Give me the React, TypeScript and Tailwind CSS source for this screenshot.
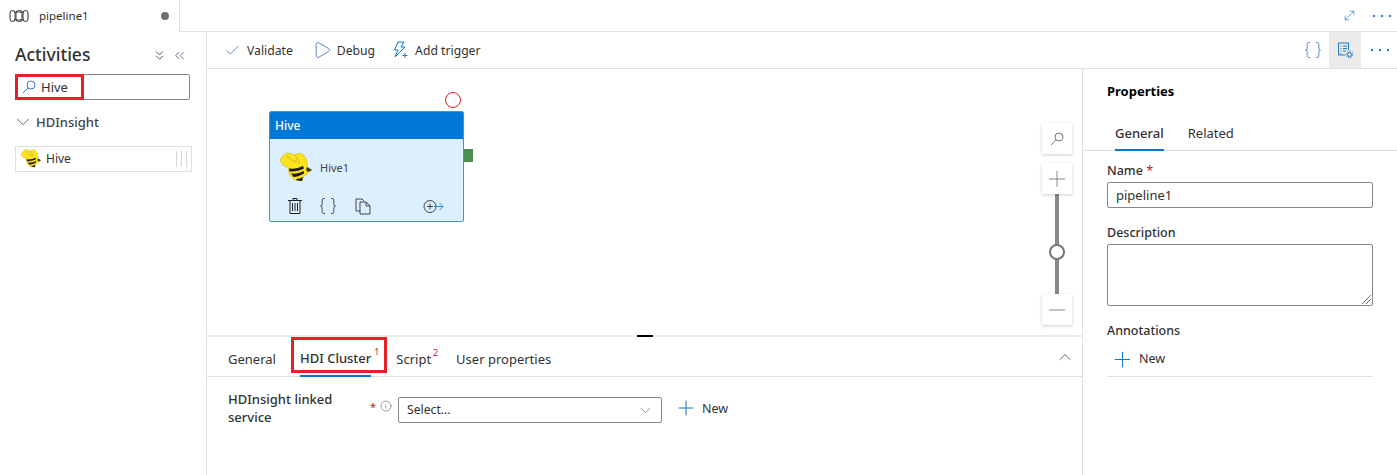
import React from 'react';
import { Braces, Check, ChevronDown, ChevronUp, ChevronsDown, ChevronsLeft, Play, Plus, Minus, MoveDiagonal, Info } from 'lucide-react';

const FONT = "[font-family:'Noto_Sans','Open_Sans',sans-serif]";

function Bee({ size }: { size: number }) {
    return (
        <svg width={size} height={size} viewBox="0 0 32 32">
            <path d="M0 8 C2 5 4 2 7 1 C10 1 13 2 15 3 C17 1 20 1 22 2 C25 4 27 7 27 10 L27 15 L32 18 L29 20 L27 22 L23 25 L22 29 L15 28 C12 26 10 24 9 21 L8 15 C6 15 4 14 3 13 C2 11 1 10 0 8 Z" fill="#fbe31f" stroke="#c7a90a" strokeWidth="0.5" />
            <path d="M9 16.5 C14 17 19 16 23 14 L24 16.5 C20 18.5 14 20 9.5 19.5 Z" fill="#211d0c" />
            <path d="M11 21.5 C15 22 20 21 24 19 L24 21.5 C20 24 16 25 13.5 25 Z" fill="#211d0c" />
            <path d="M16 27 C18 27 21 26 23 25 L22 29 L17 28.5 Z" fill="#211d0c" />
            <path d="M27 15 L32 18 L28 20 L26 18 Z" fill="#3b3514" />
            <path d="M15 3 C17 6 19 9 19 12 M7 4 C10 7 13 9 17 10" fill="none" stroke="#b39600" strokeWidth="0.6" />
        </svg>
    );
}

function PipelineIcon() {
    return (
        <svg width="20" height="14" viewBox="0 0 20 14" fill="none" stroke="#333" strokeWidth="1">
            <rect x="1" y="1.5" width="5" height="11" rx="2.5" />
            <rect x="7" y="1.5" width="6" height="11" rx="2.5" />
            <rect x="14" y="1.5" width="5" height="11" rx="2.5" />
            <path d="M5 3h10M5 11h10" />
        </svg>
    );
}

function GlassIcon({ className }: { className: string }) {
    return (
        <svg width="14" height="14" viewBox="0 0 14 14" fill="none" stroke="currentColor" strokeWidth="1" className={className}>
            <circle cx="9" cy="5" r="4" />
            <path d="M6 8L1 13" />
        </svg>
    );
}

function TriggerIcon() {
    return (
        <svg width="17" height="18" viewBox="0 0 17 18" fill="none" stroke="#0f78d4" strokeWidth="1">
            <path d="M6 1h6L9 6h4L3 16l3-7H2.5Z" />
            <path d="M13 12v5M10.5 14.5h5" />
        </svg>
    );
}

function PropertiesIcon() {
    return (
        <svg width="17" height="17" viewBox="0 0 17 17" fill="none" stroke="#1b76c8" strokeWidth="1">
            <path d="M8 13H1.5V1h10v7" />
            <path d="M3.5 4h1M6 4h4M3.5 6.5h1M6 6.5h4M3.5 9h1M6 9h3M3.5 11.5h1" />
            <circle cx="12.5" cy="12.5" r="2" />
            <circle cx="12.5" cy="12.5" r="3.4" strokeDasharray="1.4 1.2" />
        </svg>
    );
}

function TrashIcon() {
    return (
        <svg width="14" height="16" viewBox="0 0 14 16" fill="none" stroke="#222" strokeWidth="1">
            <path d="M0 2.5h14M5 2.5V.5h4v2M2 2.5V15.5h10V2.5" />
            <path d="M4.5 5v8M7 5v8M9.5 5v8" />
        </svg>
    );
}

function CopyIcon() {
    return (
        <svg width="16" height="17" viewBox="0 0 16 17" fill="none" stroke="#444" strokeWidth="1">
            <path d="M5 13H1V1h6l2 2" />
            <path d="M5 4h6l4 4v8H5Z" />
            <path d="M11 4v4h4" />
        </svg>
    );
}

function AddOutputIcon() {
    return (
        <svg width="21" height="15" viewBox="0 0 21 15" fill="none">
            <circle cx="7" cy="7.5" r="6" stroke="#444" />
            <path d="M4 7.5h6M7 4.5v6" stroke="#444" />
            <path d="M11 7.5h9M16.5 4l3.5 3.5-3.5 3.5" stroke="#1a9ad6" />
        </svg>
    );
}

function Dots() {
    return (
        <span className="flex gap-[6px]">
            <i className="w-[2px] h-[2px] bg-[#0f78d4]" />
            <i className="w-[2px] h-[2px] bg-[#0f78d4]" />
            <i className="w-[2px] h-[2px] bg-[#0f78d4]" />
        </span>
    );
}

function ZoomButton({ children, className }: { children: React.ReactNode; className: string }) {
    return (
        <div className={`absolute left-[1042px] w-[30px] h-[31px] bg-white shadow-[0_1px_3px_rgba(0,0,0,0.2)] flex items-center justify-center ${className}`}>
            {children}
        </div>
    );
}

export default function App() {
    return (
        <div className={`${FONT} w-[1397px] h-[475px] bg-white text-[#323130] text-[13px] flex flex-col overflow-hidden`}>
            <div className="h-[32px] shrink-0 flex border-b border-[#e1dfdd]">
                <div className="w-[180px] h-[32px] bg-white border-r border-[#e1dfdd] flex items-center pl-[9px] pr-[10px]">
                    <PipelineIcon />
                    <span className="ml-[10px] text-[11.5px] leading-none">pipeline1</span>
                    <span className="ml-auto w-[8px] h-[8px] rounded-full bg-[#6e6e6e]" />
                </div>
                <div className="flex-1 flex items-center justify-end gap-[16px] pr-[6px]">
                    <MoveDiagonal size={15} strokeWidth={1} className="text-[#0f78d4]" />
                    <Dots />
                </div>
            </div>
            <div className="flex-1 flex min-h-0">
                <aside className="w-[207px] shrink-0 border-r border-[#e1dfdd] px-[15px] pt-[11px]">
                    <div className="flex items-center h-[24px]">
                        <h2 className="text-[17.5px] font-medium leading-none">Activities</h2>
                        <span className="ml-auto flex items-center gap-[5px] text-[#333] mr-[4px]">
                            <ChevronsDown size={15} strokeWidth={1.3} />
                            <ChevronsLeft size={15} strokeWidth={1.3} className="text-[#25507a]" />
                        </span>
                    </div>
                    <div className="relative mt-[7px] h-[26px] w-[175px] border border-[#8a8886] rounded-[2px] flex items-center pl-[6px]">
                        <GlassIcon className="text-[#3b73c4]" />
                        <span className="ml-[5px] mt-[2px] text-[13px]">Hive</span>
                        <div className="absolute -left-[1px] -top-[1px] w-[69px] h-[26px] border-[3px] border-[#e81f27]" />
                    </div>
                    <div className="flex items-center mt-[12px] h-[20px] text-[#444]">
                        <ChevronDown size={22} strokeWidth={0.9} className="-ml-[3px]" />
                        <span className="ml-[2px] text-[13px] font-medium leading-none">HDInsight</span>
                    </div>
                    <div className="mt-[14px] h-[26px] w-[177px] border border-[#e1dfdd] flex items-center pl-[5px] pr-[4px]">
                        <Bee size={20} />
                        <span className="ml-[5px] text-[12px]">Hive</span>
                        <span className="ml-auto flex gap-[4px]">
                            <i className="w-[1px] h-[16px] bg-[#d8d6d4]" />
                            <i className="w-[1px] h-[16px] bg-[#d8d6d4]" />
                            <i className="w-[1px] h-[16px] bg-[#d8d6d4]" />
                        </span>
                    </div>
                </aside>

                <div className="flex-1 flex flex-col min-w-0">
                    <div className="h-[37px] shrink-0 border-b border-[#e1dfdd] flex items-center pl-[17px] pr-[6px] text-[12.2px]">
                        <Check size={17} strokeWidth={1.1} className="text-[#2e6fc0]" />
                        <span className="ml-[6px] mt-[2px]">Validate</span>
                        <Play size={20} strokeWidth={1} className="ml-[19px] text-[#2e6fc0]" />
                        <span className="ml-[5px] mt-[2px]">Debug</span>
                        <span className="ml-[17px] flex"><TriggerIcon /></span>
                        <span className="ml-[6px] mt-[2px]">Add trigger</span>
                        <Braces size={20} strokeWidth={1} className="ml-auto text-[#3b73c4]" />
                        <div className="ml-[6px] w-[32px] h-[36px] bg-[#edebe9] flex items-center justify-center"><PropertiesIcon /></div>
                        <span className="ml-[10px] mr-[2px]"><Dots /></span>
                    </div>
                    <div className="flex-1 flex min-h-0">
                        <main className="w-[876px] shrink-0 border-r border-[#e1dfdd] flex flex-col">
                            <div className="h-[268px] shrink-0 border-b-[2px] border-[#edebe9]" />
                            <div className="flex-1 flex flex-col">
                                <div className="relative h-[40px] shrink-0 border-b border-[#e1dfdd] flex items-end pl-[21px] text-[13px]">
                                    <span className="pb-[7px]">General</span>
                                    <span className="ml-[24px] pb-[7px] border-b-[2px] border-[#0078d4] -mb-[1px] font-medium relative">
                                        HDI Cluster
                                        <sup className="absolute -right-[8px] -top-[2px] text-[9px] font-normal text-[#c8102e] leading-none">1</sup>
                                    </span>
                                    <span className="ml-[25px] pb-[7px] relative">
                                        Script
                                        <sup className="absolute -right-[7px] -top-[2px] text-[9px] text-[#c8102e] leading-none">2</sup>
                                    </span>
                                    <span className="ml-[25px] pb-[7px]">User properties</span>
                                    <ChevronUp size={20} strokeWidth={0.9} className="absolute right-[7px] top-[10px]" />
                                </div>
                                <div className="flex items-start pl-[21px] pt-[13px]">
                                    <div className="w-[140px] text-[13px] leading-[18px] font-medium">HDInsight linked<br />service</div>
                                    <div className="w-[30px] flex items-center justify-end gap-[4px] pt-[10px] pr-[6px] text-[#a4262c]">
                                        <span className="text-[11px] leading-none">*</span>
                                        <Info size={12} strokeWidth={1} className="text-[#444]" />
                                    </div>
                                    <div className="mt-[7px] w-[264px] h-[26px] border border-[#8a8886] rounded-[2px] flex items-center px-[8px] text-[12.2px]">
                                        Select...
                                        <ChevronDown size={17} strokeWidth={0.9} className="ml-auto -mr-[1px] text-[#555]" />
                                    </div>
                                    <Plus size={24} strokeWidth={1} className="ml-[12px] mt-[6px] text-[#0f78d4]" />
                                    <span className="ml-[4px] mt-[10px] text-[12.5px]">New</span>
                                </div>
                            </div>
                        </main>

                        <aside className="flex-1">
                            <h3 className="pl-[24px] pt-[13px] text-[13px] font-bold text-black leading-[18px]">Properties</h3>
                            <div className="mt-[18px] h-[33px] border-b border-[#e1dfdd] flex items-start pl-[32px] text-[13px]">
                                <span className="h-[33px] pt-[5px] border-b-[2px] border-[#0078d4] font-medium leading-[20px]">General</span>
                                <span className="ml-[24px] pt-[5px] leading-[20px]">Related</span>
                            </div>
                            <div className="px-[24px] pt-[11px]">
                                <div className="text-[12.5px] font-medium leading-[18px]">Name <span className="font-normal text-[#a4262c]">*</span></div>
                                <div className="mt-[2px] h-[26px] border border-[#8a8886] rounded-[2px] flex items-center pl-[8px] pt-[1px] text-[13px]">pipeline1</div>
                                <div className="mt-[16px] text-[12.5px] font-medium leading-[18px]">Description</div>
                                <div className="relative mt-[2px] h-[62px] border border-[#8a8886] rounded-[2px]">
                                    <svg className="absolute right-[1px] bottom-[1px]" width="9" height="9" viewBox="0 0 9 9" stroke="#777" strokeWidth="1">
                                        <path d="M0 9L9 0M4 9L9 4" />
                                    </svg>
                                </div>
                                <div className="mt-[16px] text-[12.5px] font-medium leading-[18px]">Annotations</div>
                                <div className="mt-[3px] h-[34px] border-b border-[#e1dfdd] flex items-center pl-[3px]">
                                    <Plus size={25} strokeWidth={1} className="text-[#0f78d4]" />
                                    <span className="ml-[4px] text-[12.5px]">New</span>
                                </div>
                            </div>
                        </aside>
                    </div>
                </div>
            </div>

            {/* canvas items */}
            <div className="absolute left-[445px] top-[92px] w-[16px] h-[16px] rounded-full border border-[#f01b24]" />
            <div className="absolute left-[269px] top-[111px] w-[195px] h-[111px] border border-[#4f93b3] rounded-[2px] bg-[#dcefff] flex flex-col overflow-hidden">
                <div className="h-[27px] bg-[#0078d7] text-white text-[12px] font-medium flex items-center pl-[5px] shrink-0">Hive</div>
                <div className="flex items-center pl-[10px] pt-[13px]">
                    <Bee size={32} />
                    <span className="ml-[8px] text-[11px] text-[#444]">Hive1</span>
                </div>
                <div className="flex items-center pl-[18px] mt-[12px]">
                    <TrashIcon />
                    <Braces size={20} strokeWidth={1} className="ml-[16px] text-[#333]" />
                    <span className="ml-[17px] flex"><CopyIcon /></span>
                    <span className="ml-[52px] flex"><AddOutputIcon /></span>
                </div>
            </div>
            <div className="absolute left-[464px] top-[149px] w-[9px] h-[13px] bg-[#4a8f4e]" />

            <ZoomButton className="top-[123px]"><GlassIcon className="text-[#777]" /></ZoomButton>
            <div className="absolute left-[1055px] top-[193px] w-[4px] h-[101px] bg-[#8a8886]" />
            <ZoomButton className="top-[163px]"><Plus size={26} strokeWidth={0.7} className="text-[#666]" /></ZoomButton>
            <div className="absolute left-[1049px] top-[244px] w-[16px] h-[16px] rounded-full bg-white border-[2px] border-[#767676]" />
            <ZoomButton className="top-[294px]"><Minus size={26} strokeWidth={0.7} className="text-[#666]" /></ZoomButton>
            <div className="absolute left-[637px] top-[335px] w-[16px] h-[2px] bg-black" />
            <div className="absolute left-[291px] top-[337px] w-[96px] h-[36px] border-[3px] border-[#e81f27]" />
        </div>
    );
}
